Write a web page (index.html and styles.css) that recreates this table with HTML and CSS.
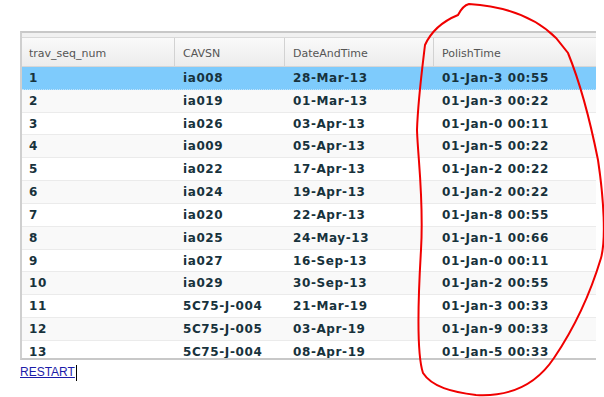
FILE: index.html
```html
<!DOCTYPE html>
<html>
<head>
<meta charset="utf-8">
<link rel="stylesheet" href="styles.css">
</head>
<body>
<div class="page">
  <div class="grid">
    <div class="band"></div>
    <div class="head">
      <div class="hcell">trav_seq_num</div>
      <div class="hcell sep">CAVSN</div>
      <div class="hcell sep">DateAndTime</div>
      <div class="hcell sep">PolishTime</div>
    </div>
    <div class="body">
      <div class="row sel"><div class="cell">1</div><div class="cell">ia008</div><div class="cell">28-Mar-13</div><div class="cell">01-Jan-3 00:55</div></div>
      <div class="row alt"><div class="cell">2</div><div class="cell">ia019</div><div class="cell">01-Mar-13</div><div class="cell">01-Jan-3 00:22</div></div>
      <div class="row"><div class="cell">3</div><div class="cell">ia026</div><div class="cell">03-Apr-13</div><div class="cell">01-Jan-0 00:11</div></div>
      <div class="row alt"><div class="cell">4</div><div class="cell">ia009</div><div class="cell">05-Apr-13</div><div class="cell">01-Jan-5 00:22</div></div>
      <div class="row"><div class="cell">5</div><div class="cell">ia022</div><div class="cell">17-Apr-13</div><div class="cell">01-Jan-2 00:22</div></div>
      <div class="row alt"><div class="cell">6</div><div class="cell">ia024</div><div class="cell">19-Apr-13</div><div class="cell">01-Jan-2 00:22</div></div>
      <div class="row"><div class="cell">7</div><div class="cell">ia020</div><div class="cell">22-Apr-13</div><div class="cell">01-Jan-8 00:55</div></div>
      <div class="row alt"><div class="cell">8</div><div class="cell">ia025</div><div class="cell">24-May-13</div><div class="cell">01-Jan-1 00:66</div></div>
      <div class="row"><div class="cell">9</div><div class="cell">ia027</div><div class="cell">16-Sep-13</div><div class="cell">01-Jan-0 00:11</div></div>
      <div class="row alt"><div class="cell">10</div><div class="cell">ia029</div><div class="cell">30-Sep-13</div><div class="cell">01-Jan-2 00:55</div></div>
      <div class="row"><div class="cell">11</div><div class="cell">5C75-J-004</div><div class="cell">21-Mar-19</div><div class="cell">01-Jan-3 00:33</div></div>
      <div class="row alt"><div class="cell">12</div><div class="cell">5C75-J-005</div><div class="cell">03-Apr-19</div><div class="cell">01-Jan-9 00:33</div></div>
      <div class="row"><div class="cell">13</div><div class="cell">5C75-J-004</div><div class="cell">08-Apr-19</div><div class="cell">01-Jan-5 00:33</div></div>
    </div>
  </div>
  <div class="links"><a class="restart" href="#">RESTART</a><span class="caret"></span></div>
</div>
<svg class="ink" width="604" height="397" viewBox="0 0 604 397">
  <path d="M458 15 C461 9 465 5 469 4 C500 6 532 14 556 38 L568 53 C579 80 590 120 598 160 C604 200 606 240 601 258 C589 298 573 330 554 358 C536 385 511 397 476 395 C452 392 432 387 423 373 C416 352 418 300 421 250 C424 200 418 160 417 130 C418 100 422 70 425 45 C430 34 441 22 458 15" fill="none" stroke="#f00000" stroke-width="2" stroke-linecap="round"/>
</svg>
</body>
</html>
```
FILE: styles.css
```css
html, body {
  margin: 0;
  padding: 0;
  background: #ffffff;
}
.page {
  padding: 31px 0 0 20px;
}
.grid {
  width: 576px;
  border-top: 2px solid #c8c8c8;
  border-left: 2px solid #cfcfcf;
  border-bottom: 2px solid #c8c8c8;
  box-sizing: border-box;
  background: #ffffff;
}
.band {
  height: 4px;
  background: #f1f1f1;
  border-bottom: 1px solid #d9d9d9;
}
.head {
  display: grid;
  grid-template-columns: 152px 110px 149px 1fr;
  height: 29px;
  box-sizing: border-box;
  border-bottom: 1px solid #d6d6d6;
  background: linear-gradient(#fafafa, #ececec);
}
.hcell {
  display: flex;
  align-items: center;
  padding-left: 7px;
  padding-top: 3px;
  font-family: "DejaVu Sans", Verdana, sans-serif;
  font-size: 11px;
  color: #555555;
}
.hcell.sep {
  border-left: 1px solid #d2d2d2;
  padding-left: 8px;
}
.body {
  height: 291px;
  overflow: hidden;
}
.row {
  display: grid;
  grid-template-columns: 152px 110px 149px 1fr;
  height: 22.83px;
  box-sizing: border-box;
  border-bottom: 1px solid #ebebeb;
  background: #ffffff;
}
.row.alt {
  background: #f9f9f9;
}
.row.sel {
  background: #7ecbfc;
  border-bottom: 1px dotted #bfe3fb;
}
.cell {
  display: flex;
  align-items: center;
  padding-left: 7px;
  font-family: "DejaVu Sans", Verdana, sans-serif;
  font-weight: bold;
  font-size: 12px;
  letter-spacing: 0.6px;
  color: #17323c;
  white-space: nowrap;
}
.cell + .cell {
  padding-left: 9px;
}
.links {
  display: flex;
  align-items: flex-start;
  padding-top: 5px;
}
.restart {
  font-family: "Liberation Sans", Arial, sans-serif;
  font-size: 12px;
  line-height: 15px;
  color: #1c1ca8;
  text-decoration: underline;
}
.caret {
  width: 1px;
  height: 16px;
  background: #000000;
  margin-left: 1px;
  margin-top: 0;
}
.ink {
  position: absolute;
  left: 0;
  top: 0;
  pointer-events: none;
}
```
